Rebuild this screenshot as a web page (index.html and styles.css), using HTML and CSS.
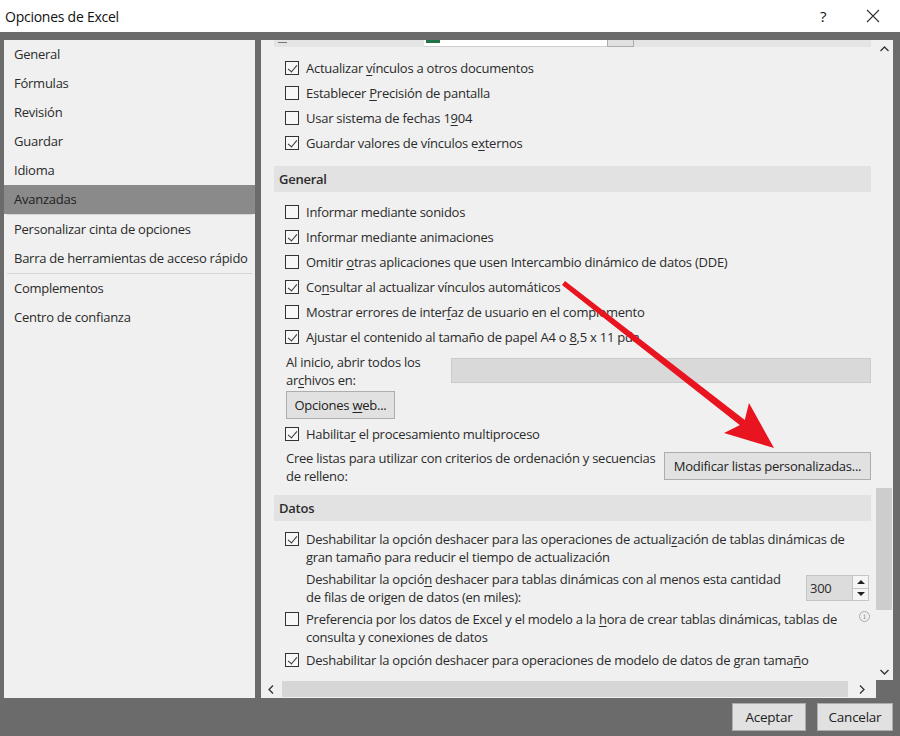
FILE: index.html
```html
<!DOCTYPE html>
<html lang="es">
<head>
    <meta charset="UTF-8">
    <title>Opciones de Excel</title>
    <link rel="stylesheet" href="styles.css">
</head>
<body>
    <!-- Barra de título -->
    <div class="titlebar">
        <span class="title">Opciones de Excel</span>
        <span class="help">?</span>
        <span class="close">
            <svg width="14" height="14" viewBox="0 0 14 14"><path d="M1 1 L13 13 M13 1 L1 13" stroke="#333" stroke-width="1.1" fill="none"/></svg>
        </span>
    </div>

    <div class="frame">
        <div class="panels">
            <!-- Menú lateral -->
            <ul class="nav">
                <li>General</li>
                <li>Fórmulas</li>
                <li>Revisión</li>
                <li>Guardar</li>
                <li>Idioma</li>
                <li class="selected">Avanzadas</li>
                <li class="sep"></li>
                <li>Personalizar cinta de opciones</li>
                <li>Barra de herramientas de acceso rápido</li>
                <li class="sep"></li>
                <li>Complementos</li>
                <li>Centro de confianza</li>
            </ul>

            <div class="main">
                <div class="content">
                    <!-- fila cortada por el desplazamiento -->
                    <div class="strip">
                        <span class="strip-box"></span>
                        <span class="strip-input"><span class="strip-icon"></span></span>
                        <span class="strip-btn"></span>
                    </div>

                    <div class="row first"><span class="cb on"></span><span>Actualizar <u>v</u>ínculos a otros documentos</span></div>
                    <div class="row"><span class="cb"></span><span>Establecer <u>P</u>recisión de pantalla</span></div>
                    <div class="row"><span class="cb"></span><span>Usar sistema de fechas 1<u>9</u>04</span></div>
                    <div class="row"><span class="cb on"></span><span>Guardar valores de vínculos e<u>x</u>ternos</span></div>

                    <div class="section">General</div>

                    <div class="row after-section"><span class="cb"></span><span>Informar mediante sonidos</span></div>
                    <div class="row"><span class="cb on"></span><span>Informar mediante animaciones</span></div>
                    <div class="row"><span class="cb"></span><span>Omitir <u>o</u>tras aplicaciones que usen Intercambio dinámico de datos (DDE)</span></div>
                    <div class="row"><span class="cb on"></span><span>Co<u>n</u>sultar al actualizar vínculos automáticos</span></div>
                    <div class="row"><span class="cb"></span><span>Mostrar errores de inter<u>f</u>az de usuario en el complemento</span></div>
                    <div class="row"><span class="cb on"></span><span>Ajustar el contenido al tamaño de papel A4 o <u>8</u>,5 x 11 pda</span></div>

                    <div class="field-row">
                        <div class="field-label">Al inicio, abrir todos los<br>ar<u>c</u>hivos en:</div>
                        <div class="textbox"></div>
                    </div>

                    <button class="btn btn-web">Opciones <u>w</u>eb...</button>

                    <div class="row tight"><span class="cb on"></span><span>Habilita<u>r</u> el procesamiento multiproceso</span></div>

                    <div class="lists-row">
                        <div class="lists-label">Cree listas para utilizar con criterios de ordenación y secuencias<br>de relleno:</div>
                        <button class="btn btn-lists">Modificar listas personalizadas...</button>
                    </div>

                    <div class="section datos">Datos</div>

                    <div class="row multi first-datos"><span class="cb on"></span><span>Deshabilitar la opción deshacer para las operaciones de actuali<u>z</u>ación de tablas dinámicas de<br>gran tamaño para reducir el tiempo de actualización</span></div>

                    <div class="spin-row">
                        <div class="spin-label">Deshabilitar la opció<u>n</u> deshacer para tablas dinámicas con al menos esta cantidad<br>de filas de origen de datos (en miles):</div>
                        <div class="spinner">
                            <span class="spin-value">300</span>
                            <span class="spin-btns">
                                <span class="spin-up"></span>
                                <span class="spin-down"></span>
                            </span>
                        </div>
                    </div>

                    <div class="row multi gap4"><span class="cb"></span><span class="grow">Preferencia por los datos de Excel y el modelo a la <u>h</u>ora de crear tablas dinámicas, tablas de<br>consulta y conexiones de datos</span><span class="info">i</span></div>

                    <div class="row multi gap5"><span class="cb on"></span><span>Deshabilitar la opción deshacer para operaciones de modelo de datos de gran tama<u>ñ</u>o</span></div>
                </div>

                <div class="vscroll">
                    <span class="arrow">
                        <svg width="9" height="6" viewBox="0 0 9 6"><path d="M0.5 5 L4.5 1 L8.5 5" stroke="#333" stroke-width="1.3" fill="none"/></svg>
                    </span>
                    <span class="vthumb"></span>
                    <span class="arrow bottom">
                        <svg width="9" height="6" viewBox="0 0 9 6"><path d="M0.5 1 L4.5 5 L8.5 1" stroke="#333" stroke-width="1.3" fill="none"/></svg>
                    </span>
                </div>

                <div class="hscroll">
                    <span class="harrow left">
                        <svg width="6" height="9" viewBox="0 0 6 9"><path d="M5 0.5 L1 4.5 L5 8.5" stroke="#333" stroke-width="1.3" fill="none"/></svg>
                    </span>
                    <span class="hthumb"></span>
                    <span class="harrow right">
                        <svg width="6" height="9" viewBox="0 0 6 9"><path d="M1 0.5 L5 4.5 L1 8.5" stroke="#333" stroke-width="1.3" fill="none"/></svg>
                    </span>
                </div>

                <div class="corner"></div>
            </div>
        </div>

        <div class="footer">
            <button class="btn btn-ok">Aceptar</button>
            <button class="btn btn-cancel">Cancelar</button>
        </div>
    </div>

    <!-- Flecha roja de anotación sobre la captura -->
    <svg class="annotation" width="900" height="736" viewBox="0 0 900 736">
        <polygon points="562,285 565,281 750,424 746,430" fill="#e8141f"/>
        <polygon points="774,448 724,433 744,423 749,403" fill="#e8141f"/>
    </svg>
</body>
</html>
```

FILE: styles.css
```css
* {
    box-sizing: border-box;
}
body {
    margin: 0;
    font-family: "Open Sans", "Noto Sans", sans-serif;
    font-size: 13px;
    letter-spacing: -0.25px;
    color: #2b2b2b;
    background-color: #fff;
    position: relative;
}
u {
    text-decoration-thickness: 1px;
    text-underline-offset: 2px;
}

/* Barra de título */
.titlebar {
    height: 32px;
    display: flex;
    align-items: center;
    padding-left: 5px;
    padding-right: 2px;
    color: #111;
    font-size: 14px;
}
.title {
    flex: 1;
}
.help, .close {
    width: 50px;
    display: flex;
    justify-content: center;
    align-items: center;
}
.help {
    font-size: 15px;
}

/* Marco oscuro del cuadro de diálogo */
.frame {
    height: 704px;
    background-color: #6b6b6b;
    padding: 8px 7px 0 4px;
    display: flex;
    flex-direction: column;
}
.panels {
    display: flex;
    gap: 6px;
    height: 658px;
    flex: none;
}

/* Menú lateral */
.nav {
    width: 251px;
    flex: none;
    margin: 0;
    padding: 0;
    list-style: none;
    background-color: #f0f0f0;
}
.nav li {
    height: 29px;
    line-height: 29px;
    padding-left: 10px;
    white-space: nowrap;
}
.nav li.selected {
    background-color: #8a8a8a;
    color: #222;
}
.nav li.sep {
    height: 1px;
    margin: 0 3px;
    background-color: #d4d4d4;
}

/* Área principal */
.main {
    flex: 1;
    display: grid;
    grid-template-columns: 1fr 17px;
    grid-template-rows: 640px 18px;
}
.content {
    background-color: #f0f0f0;
    overflow: hidden;
    display: flex;
    flex-direction: column;
}
.content > * {
    flex-shrink: 0;
}
.strip {
    height: 7px;
    margin: 0 5px 0 13px;
    background-color: #e4e4e4;
    display: flex;
}
.strip-box {
    width: 9px;
    height: 3px;
    margin: 0 0 0 4px;
    border-bottom: 1px solid #777;
}
.strip-input {
    width: 183px;
    margin-left: 137px;
    background-color: #fff;
    border-bottom: 1px solid #cfcfcf;
}
.strip-icon {
    display: block;
    width: 14px;
    height: 3px;
    margin-left: 2px;
    background-color: #217346;
}
.strip-btn {
    width: 27px;
    background-color: #e1e1e1;
    border: 1px solid #adadad;
    border-top: none;
}

.row {
    display: flex;
    align-items: center;
    gap: 7px;
    height: 25px;
    padding-left: 24px;
    white-space: nowrap;
}
.row.first {
    margin-top: 8px;
}
.row.after-section {
    margin-top: 7px;
}
.row.tight {
    margin-top: 2px;
}
.row.multi {
    height: auto;
    align-items: flex-start;
    line-height: 18px;
}
.row.multi .cb {
    margin-top: 2px;
}
.row.first-datos {
    margin-top: 9px;
}
.row.gap4 {
    margin-top: 4px;
    padding-right: 6px;
}
.row.gap5 {
    margin-top: 5px;
}
.grow {
    flex: 1;
}

/* Casillas de verificación */
.cb {
    width: 14px;
    height: 14px;
    flex: none;
    border: 1px solid #333;
    background-color: #f7f7f7;
    position: relative;
}
.cb.on::after {
    content: "";
    position: absolute;
    left: 4px;
    top: 1px;
    width: 4px;
    height: 8px;
    border: solid #333;
    border-width: 0 1.2px 1.2px 0;
    transform: rotate(40deg);
}

.section {
    margin: 11px 5px 0 13px;
    height: 26px;
    background-color: #e2e2e2;
    font-weight: 600;
    padding-left: 5px;
    display: flex;
    align-items: center;
}
.section.datos {
    margin-top: 10px;
}

.field-row {
    display: flex;
    margin: 4px 5px 0 25px;
    line-height: 18px;
}
.field-label {
    width: 165px;
}
.textbox {
    flex: 1;
    height: 25px;
    margin-top: 5px;
    background-color: #d9d9d9;
    border: 1px solid #cbcbcb;
}

/* Botones */
.btn {
    font-family: inherit;
    font-size: 13px;
    letter-spacing: -0.25px;
    color: #222;
    background-color: #e1e1e1;
    border: 1px solid #adadad;
    height: 28px;
    padding: 0;
}
.btn-web {
    width: 109px;
    margin: 2px 0 0 25px;
    align-self: flex-start;
}
.lists-row {
    display: flex;
    margin: 3px 5px 0 25px;
    line-height: 18px;
}
.lists-label {
    flex: 1;
    white-space: nowrap;
}
.btn-lists {
    width: 207px;
    margin-top: 3px;
}

.spin-row {
    display: flex;
    margin: 4px 7px 0 45px;
    line-height: 18px;
}
.spin-label {
    flex: 1;
    white-space: nowrap;
}
.spinner {
    width: 63px;
    height: 26px;
    margin-top: 5px;
    display: flex;
    background-color: #dcdcdc;
    border: 1px solid #c4c4c4;
}
.spin-value {
    flex: 1;
    line-height: 24px;
    padding-left: 3px;
}
.spin-btns {
    width: 16px;
    display: flex;
    flex-direction: column;
    border-left: 1px solid #c4c4c4;
    background-color: #f5f5f5;
}
.spin-up, .spin-down {
    flex: 1;
    display: flex;
    justify-content: center;
    align-items: center;
}
.spin-up {
    border-bottom: 1px solid #c4c4c4;
}
.spin-up::before, .spin-down::before {
    content: "";
    border-left: 4px solid transparent;
    border-right: 4px solid transparent;
}
.spin-up::before {
    border-bottom: 4px solid #222;
}
.spin-down::before {
    border-top: 4px solid #222;
}
.info {
    width: 11px;
    height: 11px;
    flex: none;
    margin-top: 1px;
    border: 1px solid #aaa;
    border-radius: 50%;
    color: #999;
    font-size: 8px;
    line-height: 9px;
    text-align: center;
    font-family: "DejaVu Serif", serif;
    letter-spacing: 0;
}

/* Barras de desplazamiento */
.vscroll {
    background-color: #f0f0f0;
    display: flex;
    flex-direction: column;
}
.arrow {
    height: 17px;
    flex: none;
    display: flex;
    justify-content: center;
    align-items: center;
}
.arrow.bottom {
    margin-top: auto;
}
.vthumb {
    height: 122px;
    flex: none;
    margin: 431px 1px 0 0;
    background-color: #cdcdcd;
}
.hscroll {
    background-color: #f0f0f0;
    display: flex;
}
.harrow {
    display: flex;
    justify-content: center;
    align-items: center;
}
.harrow.left {
    width: 20px;
}
.harrow.right {
    width: 28px;
}
.hthumb {
    flex: 1;
    margin: 1px 0 1px 1px;
    background-color: #d6d6d6;
}
.corner {
    background-color: #6b6b6b;
}

/* Botones inferiores */
.footer {
    height: 38px;
    display: flex;
    justify-content: flex-end;
    gap: 11px;
    padding-top: 5px;
}
.btn-ok, .btn-cancel {
    font-size: 13.5px;
}
.btn-ok {
    width: 74px;
}
.btn-cancel {
    width: 76px;
}

.annotation {
    position: absolute;
    left: 0;
    top: 0;
    pointer-events: none;
}
```
